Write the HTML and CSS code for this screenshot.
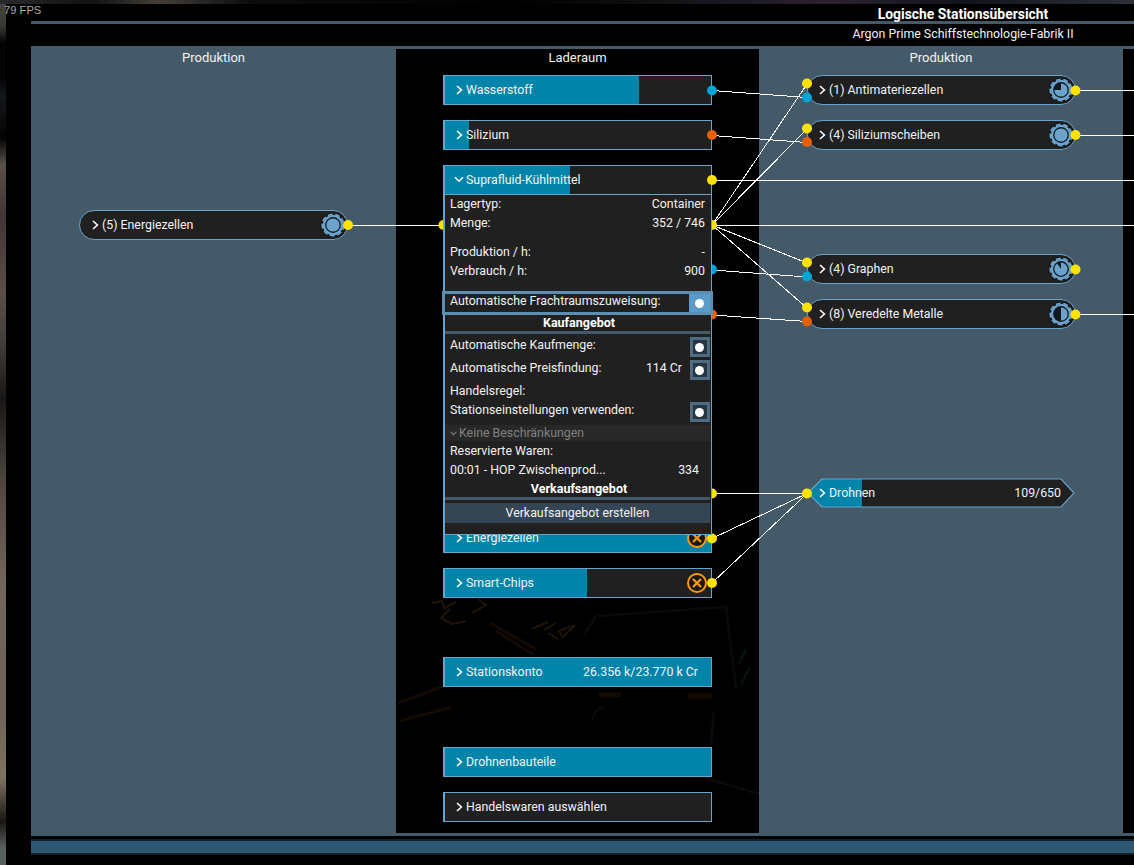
FILE: index.html
```html
<!DOCTYPE html>
<html lang="de">
  <head>
    <meta charset="UTF-8" />
    <meta name="viewport" content="width=device-width, initial-scale=1.0" />
    <title>Logische Stationsübersicht</title>
    <link rel="stylesheet" href="styles.css">
  </head>
  <body>
    <!-- Shared icons -->
    <svg class="defs" width="0" height="0">
      <symbol id="chevron" viewBox="0 0 7 10">
        <path d="M1 1 L5.4 5 L1 9" fill="none" stroke="currentColor" stroke-width="1.6" />
      </symbol>
      <symbol id="chevron-down" viewBox="0 0 10 7">
        <path d="M1 1.2 L5 5.2 L9 1.2" fill="none" stroke="currentColor" stroke-width="1.5" />
      </symbol>
      <symbol id="gear" viewBox="0 0 24 24">
        <circle cx="12" cy="12" r="10.3" fill="#6ba3cb" />
        <circle cx="12" cy="12" r="10.7" fill="none" stroke="#6ba3cb" stroke-width="1.8" stroke-dasharray="4.9 2.57" />
        <circle cx="12" cy="12" r="7.9" fill="#111a20" />
      </symbol>
      <symbol id="blocked" viewBox="0 0 22 22">
        <circle cx="11" cy="11" r="9" fill="#1b1712" stroke="#ff9a0c" stroke-width="2" />
        <path d="M7 7 L15 15 M15 7 L7 15" stroke="#ff9a0c" stroke-width="2.2" />
      </symbol>
    </svg>

    <div class="fps">79 FPS</div>

    <div class="frame">
      <header class="header">
        <h1>Logische Stationsübersicht</h1>
        <h2>Argon Prime Schiffstechnologie-Fabrik II</h2>
      </header>

      <main class="board">
        <!-- Production, first stage -->
        <section class="column">
          <h3>Produktion</h3>
          <div class="nodes">
            <div class="node round row-4">
              <svg class="chevron"><use href="#chevron" /></svg>
              <span class="name">(5) Energiezellen</span>
              <svg class="gear" viewBox="0 0 24 24"><use href="#gear" /><circle cx="12" cy="12" r="6.6" fill="#6ba3cb" /></svg>
            </div>
          </div>
        </section>

        <!-- Storage -->
        <section class="column storage">
          <h3>Laderaum</h3>
          <svg class="decor" viewBox="0 0 363 784">
            <g fill="none" stroke="#1f1507" stroke-width="2">
              <path d="M36 554 L46 552 L48 559 L60 553 M54 560 L45 569 L56 575 L70 572 M76 564 L90 556 L82 550" />
              <path d="M136 580 L152 573 M148 581 L160 574 M152 584 L162 590 M163 582 L179 576 L167 588 Z" />
            </g>
            <g fill="none" stroke="#130a03" stroke-width="3">
              <path d="M94 574 L140 600 M100 582 L138 606 M2 654 L50 636 M4 672 L56 658" />
              <path d="M203 646 h22 M292 647 h24" stroke-width="5" />
            </g>
            <g fill="none" stroke="#07090c" stroke-width="3">
              <path d="M188 586 L200 567 L330 558 L340 640 M196 672 Q198 660 208 658 M318 662 L312 730 L363 745" />
              <path d="M343 615 L350 600 M345 635 L354 618" stroke="#05100d" />
            </g>
          </svg>
          <div class="nodes">
            <div class="node row-1">
              <div class="fill" style="width: 73%"></div>
              <svg class="chevron"><use href="#chevron" /></svg>
              <span class="name">Wasserstoff</span>
            </div>
            <div class="node row-2">
              <div class="fill" style="width: 9%"></div>
              <svg class="chevron"><use href="#chevron" /></svg>
              <span class="name">Silizium</span>
            </div>
            <div class="node row-3">
              <div class="fill" style="width: 47%"></div>
              <svg class="chevron down"><use href="#chevron-down" /></svg>
              <span class="name">Suprafluid-Kühlmittel</span>
            </div>
            <div class="node row-11">
              <div class="fill" style="width: 100%"></div>
              <svg class="chevron"><use href="#chevron" /></svg>
              <span class="name">Energiezellen</span>
              <svg class="blocked"><use href="#blocked" /></svg>
            </div>
            <div class="node row-12">
              <div class="fill" style="width: 53.4%"></div>
              <svg class="chevron"><use href="#chevron" /></svg>
              <span class="name">Smart-Chips</span>
              <svg class="blocked"><use href="#blocked" /></svg>
            </div>
            <div class="node row-14">
              <div class="fill" style="width: 100%"></div>
              <svg class="chevron"><use href="#chevron" /></svg>
              <span class="name">Stationskonto</span>
              <span class="value">26.356 k/23.770 k Cr</span>
            </div>
            <div class="node row-16">
              <div class="fill" style="width: 100%"></div>
              <svg class="chevron"><use href="#chevron" /></svg>
              <span class="name">Drohnenbauteile</span>
            </div>
            <div class="node row-17">
              <svg class="chevron"><use href="#chevron" /></svg>
              <span class="name">Handelswaren auswählen</span>
            </div>
          </div>
        </section>

        <!-- Production, second stage -->
        <section class="column second">
          <h3>Produktion</h3>
          <div class="nodes">
            <div class="node round row-1">
              <svg class="chevron"><use href="#chevron" /></svg>
              <span class="name">(1) Antimateriezellen</span>
              <svg class="gear" viewBox="0 0 24 24"><use href="#gear" /><path d="M12 12 V5.4 A6.6 6.6 0 1 1 5.4 12 Z" fill="#6ba3cb" /></svg>
            </div>
            <div class="node round row-2">
              <svg class="chevron"><use href="#chevron" /></svg>
              <span class="name">(4) Siliziumscheiben</span>
              <svg class="gear" viewBox="0 0 24 24"><use href="#gear" /><circle cx="12" cy="12" r="6.6" fill="#6ba3cb" /></svg>
            </div>
            <div class="node round row-5">
              <svg class="chevron"><use href="#chevron" /></svg>
              <span class="name">(4) Graphen</span>
              <svg class="gear" viewBox="0 0 24 24"><use href="#gear" /><path d="M12 12 V5.4 A6.6 6.6 0 1 1 8.2 6.6 Z" fill="#6ba3cb" /></svg>
            </div>
            <div class="node round row-6">
              <svg class="chevron"><use href="#chevron" /></svg>
              <span class="name">(8) Veredelte Metalle</span>
              <svg class="gear" viewBox="0 0 24 24"><use href="#gear" /><path d="M12 5.4 A6.6 6.6 0 0 1 12 18.6 Z" fill="#6ba3cb" /></svg>
            </div>
            <div class="node hex row-10">
              <svg class="hex-shape" viewBox="0 0 269 30">
                <path d="M1 15 L15 1 H254 L267 15 L254 29 H15 Z" fill="#202020" />
                <path d="M1 15 L15 1 H55 V29 H15 Z" fill="#0084aa" />
                <path d="M1 15 L15 1 H254 L267 15 L254 29 H15 Z" fill="none" stroke="#69a4cc" stroke-width="1.2" />
              </svg>
              <svg class="chevron"><use href="#chevron" /></svg>
              <span class="name">Drohnen</span>
              <span class="value">109/650</span>
            </div>
          </div>
        </section>

        <section class="column storage"></section>

        <!-- Connections between the nodes -->
        <svg class="wires" viewBox="31 46 1103 790">
          <g class="lines">
            <path d="M348 225.5 H443" />
            <path d="M712 90.5 L807 97.5" />
            <path d="M712 135.5 L807 142.5" />
            <path d="M712 180.5 H1134" />
            <path d="M712 225.5 H1134" />
            <path d="M712 225 L807 84" />
            <path d="M712 225 L807 129" />
            <path d="M712 225 L807 263" />
            <path d="M712 225 L807 308" />
            <path d="M712 270 L807 277" />
            <path d="M712 315 L807 321.5" />
            <path d="M712 493.5 H807" />
            <path d="M712 538.5 L807 493.5" />
            <path d="M712 583 L807 493.5" />
            <path d="M1076 90.5 H1134" />
            <path d="M1076 135.5 H1134" />
            <path d="M1076 314.5 H1134" />
          </g>
          <g class="slot container">
            <circle cx="348" cy="225" r="5" />
            <circle cx="443.5" cy="225" r="5" />
            <circle cx="712" cy="180" r="5" />
            <circle cx="712" cy="225" r="5" />
            <circle cx="712" cy="493.5" r="5" />
            <circle cx="712" cy="538.5" r="5" />
            <circle cx="712" cy="583" r="5" />
            <circle cx="807" cy="83.5" r="5" />
            <circle cx="807" cy="128.5" r="5" />
            <circle cx="807" cy="262.5" r="5" />
            <circle cx="807" cy="307.5" r="5" />
            <circle cx="807" cy="493.5" r="5" />
            <circle cx="1075.5" cy="90.5" r="5" />
            <circle cx="1075.5" cy="135" r="5" />
            <circle cx="1075.5" cy="269.5" r="5" />
            <circle cx="1075.5" cy="314.5" r="5" />
          </g>
          <g class="slot liquid">
            <circle cx="712" cy="90.5" r="5" />
            <circle cx="712" cy="269.5" r="5" />
            <circle cx="807" cy="97.5" r="5" />
            <circle cx="807" cy="276.5" r="5" />
          </g>
          <g class="slot solid">
            <circle cx="712" cy="135" r="5" />
            <circle cx="712" cy="314.5" r="5" />
            <circle cx="807" cy="142" r="5" />
            <circle cx="807" cy="321.5" r="5" />
          </g>
        </svg>

        <!-- Opened details of the selected ware -->
        <div class="details">
          <div class="line"><span>Lagertyp:</span><span>Container</span></div>
          <div class="line spaced"><span>Menge:</span><span>352 / 746</span></div>
          <div class="line"><span>Produktion / h:</span><span>-</span></div>
          <div class="line"><span>Verbrauch / h:</span><span>900</span></div>
          <div class="option selected"><span>Automatische Frachtraumszuweisung:</span><i class="check"></i></div>
          <h4>Kaufangebot</h4>
          <div class="option"><span>Automatische Kaufmenge:</span><i class="check"></i></div>
          <div class="option"><span>Automatische Preisfindung:</span><span class="price">114 Cr</span><i class="check"></i></div>
          <div class="line rule"><span>Handelsregel:</span></div>
          <div class="option"><span>Stationseinstellungen verwenden:</span><i class="check"></i></div>
          <div class="dropdown">
            <svg class="small-chevron"><use href="#chevron-down" /></svg>
            <span>Keine Beschränkungen</span>
          </div>
          <div class="line"><span>Reservierte Waren:</span></div>
          <div class="line reserved"><span>00:01 - HOP Zwischenprod...</span><span>334</span></div>
          <h4>Verkaufsangebot</h4>
          <div class="button">Verkaufsangebot erstellen</div>
        </div>
      </main>

      <footer class="footer"></footer>
    </div>
  </body>
</html>
```
FILE: styles.css
```css
* {
  box-sizing: border-box;
}

body {
  margin: 0;
  width: 1134px;
  height: 865px;
  overflow: hidden;
  position: relative;
  padding: 4px 0 0 6px;
  font-family: "Roboto", sans-serif;
  font-size: 12.35px;
  color: #f2f2f2;
  background:
    linear-gradient(90deg, #2a2a2a, #111 8%, #443f3a 14%, #0c0d10 22%, #000 45%, #141418 60%, #2b2230 73%, #11141c 85%, #2e3038) 0 0 / 100% 4px no-repeat,
    linear-gradient(#47443f 0, #3a3835 3%, #020305 5%, #020305 9%, #14171b 11%, #040404 16%, #57504a 19%, #3d3632 25%, #57504a 34%, #413b37 40%, #191716 46%, #4e4740 56%, #6f685a 68%, #6b6455 82%, #7a7460 90%, #1a1512 95%, #59615d 98%);
}

h1,
h2,
h3,
h4 {
  margin: 0;
  font-size: 12.35px;
  font-weight: 400;
  text-align: center;
}

.defs {
  position: absolute;
}

.fps {
  position: absolute;
  left: 4px;
  top: 3px;
  font: 11.2px/14px "Liberation Sans", sans-serif;
  color: #aaa;
}

.frame {
  height: 861px;
  padding-left: 25px;
  background: #000;
}

.header {
  height: 42px;
}

/* The titles are centred on the whole map, which goes on to the right */
.header h1 {
  height: 20px;
  padding: 1px 0 0 761px;
  line-height: 19px;
  font-size: 13.9px;
  letter-spacing: 0;
  font-weight: 700;
  border-bottom: 3px solid #445a69;
  color: #fff;
}

.header h2 {
  padding-left: 761px;
  line-height: 21px;
}

.board {
  position: relative;
  display: grid;
  grid-template-columns: 365px 363px 364px 11px;
  height: 790px;
  padding: 3px 0;
  background: #445a69;
}

.column {
  position: relative;
}

.column h3 {
  height: 19px;
  line-height: 17px;
  font-size: 13px;
}

.storage {
  background: #000;
}

.decor {
  position: absolute;
  left: 0;
  top: 0;
  width: 363px;
  height: 784px;
}

.nodes {
  display: grid;
  grid-template-rows: repeat(17, 44.78px);
  align-items: center;
  padding-left: 48px;
  position: relative;
}

.storage .nodes {
  padding-left: 47px;
}

.node {
  position: relative;
  display: flex;
  align-items: center;
  width: 269px;
  height: 30px;
  padding: 0 13px 0 11px;
  border: 1px solid #69a4cc;
  border-left-width: 2px;
  background: #202020;
}

.row-1 { grid-row: 1; }
.row-2 { grid-row: 2; }
.row-3 { grid-row: 3; }
.row-4 { grid-row: 4; }
.row-5 { grid-row: 5; }
.row-6 { grid-row: 6; }
.row-10 { grid-row: 10; }
.row-11 { grid-row: 11; }
.row-12 { grid-row: 12; }
.row-14 { grid-row: 14; }
.row-16 { grid-row: 16; }
.row-17 { grid-row: 17; }

.round {
  border-left-width: 1px;
  border-radius: 15px;
  padding: 0 2px 0 12px;
}

.second .round {
  padding-left: 11px;
}

.hex {
  border: none;
  background: none;
  padding: 0 15px 0 12px;
}

.hex-shape {
  position: absolute;
  left: 0;
  top: 0;
  width: 269px;
  height: 30px;
}

.fill {
  position: absolute;
  left: 0;
  top: 0;
  bottom: 0;
  background: #0084aa;
}

.chevron {
  position: relative;
  flex: none;
  width: 7px;
  height: 10px;
  margin-right: 3px;
  color: #fff;
}

.chevron.down {
  width: 10px;
  height: 7px;
  margin-left: -2px;
  margin-right: 2px;
}

.name,
.value {
  position: relative;
}

.name {
  flex: 1;
}

.gear {
  width: 24px;
  height: 24px;
  filter: drop-shadow(0 0 1px #000);
}

.blocked {
  position: relative;
  width: 22px;
  height: 22px;
  margin-right: -10px;
}

.wires {
  position: absolute;
  left: 0;
  top: 0;
  width: 1103px;
  height: 790px;
}

.lines {
  stroke: #fff;
  stroke-width: 1;
  shape-rendering: crispEdges;
}

.container {
  fill: #ffe200;
}

.liquid {
  fill: #00a5d6;
}

.solid {
  fill: #e65f00;
}

/* Details panel, drawn over the nodes below it */
.details {
  position: absolute;
  left: 412px;
  top: 148px;
  width: 269px;
  height: 341px;
  border: 1px solid #69a4cc;
  border-left-width: 2px;
  background: #202020;
}

.line {
  display: flex;
  justify-content: space-between;
  height: 19px;
  line-height: 18px;
  padding: 0 6px 0 5px;
}

.spaced {
  margin-bottom: 10px;
}

.option {
  display: flex;
  height: 23px;
  padding: 2px 1px 0 5px;
  line-height: 16px;
}

.option span:first-child {
  flex: 1;
}

.price {
  margin-right: 8px;
}

.selected {
  height: 24px;
  margin: 10px -2px 0 -3px;
  padding: 0 1px 0 5px;
  line-height: 15px;
  border: 3px solid #5b8fb2;
}

.check {
  display: flex;
  align-items: center;
  justify-content: center;
  width: 20px;
  height: 20px;
  border: 3px solid #4f6b80;
  background: #263642;
}

.check::before {
  content: "";
  width: 9px;
  height: 9px;
  margin-right: 1px;
  border-radius: 50%;
  background: #fff;
}

.selected .check {
  width: 21px;
  height: 18px;
  margin-right: -1px;
  border-color: #5b9bcb;
  background: #5b9bcb;
}

.details h4 {
  height: 19px;
  margin-right: 1px;
  padding-left: 3px;
  line-height: 16px;
  font-weight: 700;
  font-size: 12.5px;
  color: #fff;
  border-bottom: 3px solid #445a69;
}

.details h4 + .option {
  margin-top: 1px;
}

.rule {
  line-height: 20px;
}

.dropdown {
  display: flex;
  align-items: center;
  height: 16px;
  margin: 2px 1px 1px 0;
  padding-left: 5px;
  color: #808080;
  background: #282828;
}

.small-chevron {
  width: 7px;
  height: 5px;
  margin-right: 2px;
}

.reserved {
  margin-bottom: 1px;
  padding-right: 12px;
}

.button {
  height: 20px;
  margin: 3px 1px 0 0;
  line-height: 20px;
  text-align: center;
  background: #344653;
}

.footer {
  height: 16px;
  margin-top: 3px;
  background: #2d5672;
  border: solid #14222b;
  border-width: 2px 0;
}
```
